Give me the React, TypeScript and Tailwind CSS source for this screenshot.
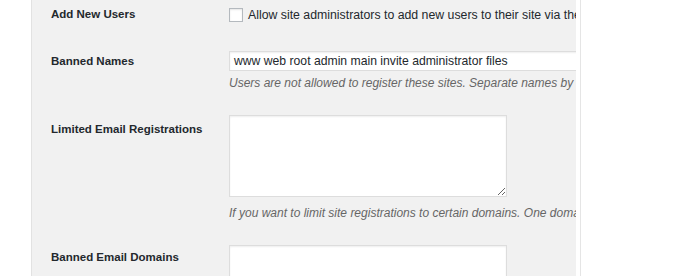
import React from "react";

export default function App() {
  return (
    <div
      className="w-[688px] h-[276px] flex bg-white overflow-hidden text-[#23282d]"
      style={{ fontFamily: '"Liberation Sans", Arial, sans-serif' }}
    >
      <div className="w-[31px] shrink-0 bg-white" />
      <div className="w-px shrink-0 bg-[#e2e2e2]" />
      <div className="w-[544px] shrink-0 bg-[#f1f1f1] overflow-hidden pl-[19px]">
        {/* Add New Users */}
        <div className="flex items-center mt-[5px] h-[20px]">
          <div className="w-[178px] shrink-0 text-[11.5px] font-bold">Add New Users</div>
          <div className="flex items-center whitespace-nowrap">
            <span className="w-[14px] h-[14px] border border-[#b4b9be] bg-white shadow-[inset_0_1px_2px_rgba(0,0,0,0.1)] shrink-0" />
            <span className="ml-[5px] text-[12.3px]">
              Allow site administrators to add new users to their site via the
            </span>
          </div>
        </div>

        {/* Banned Names */}
        <div className="flex mt-[26px]">
          <div className="w-[178px] shrink-0 text-[11.5px] font-bold h-[20px] flex items-center pt-[2px]">
            Banned Names
          </div>
          <div className="flex flex-col">
            <div className="w-[400px] h-[20px] bg-white border border-[#dddddd] shadow-[inset_0_1px_2px_rgba(0,0,0,0.07)] flex items-center pl-[4px] text-[12.2px] whitespace-nowrap">
              www web root admin main invite administrator files
            </div>
            <div className="mt-[4px] h-[16px] leading-[16px] text-[12px] italic text-[#666] whitespace-nowrap">
              Users are not allowed to register these sites. Separate names by
            </div>
          </div>
        </div>

        {/* Limited Email Registrations */}
        <div className="flex mt-[24px]">
          <div className="w-[178px] shrink-0 text-[11.5px] font-bold pt-[6px] leading-[16px]">
            Limited Email Registrations
          </div>
          <div className="flex flex-col">
            <textarea
              readOnly
              className="w-[278px] h-[82px] bg-white border border-[#dddddd] shadow-[inset_0_1px_2px_rgba(0,0,0,0.07)] outline-none block"
            />
            <div className="mt-[8px] h-[16px] leading-[16px] text-[12px] italic text-[#666] whitespace-nowrap">
              If you want to limit site registrations to certain domains. One domain per line.
            </div>
          </div>
        </div>

        {/* Banned Email Domains */}
        <div className="flex mt-[24px]">
          <div className="w-[178px] shrink-0 text-[11.5px] font-bold pt-[4px] leading-[16px]">
            Banned Email Domains
          </div>
          <div className="flex flex-col">
            <textarea
              readOnly
              className="w-[278px] h-[82px] bg-white border border-[#dddddd] shadow-[inset_0_1px_2px_rgba(0,0,0,0.07)] outline-none block"
            />
          </div>
        </div>
      </div>
      <div className="w-[4px] shrink-0 bg-white" />
      <div className="w-px shrink-0 bg-[#e5e5e5]" />
      <div className="flex-1 bg-white" />
    </div>
  );
}
